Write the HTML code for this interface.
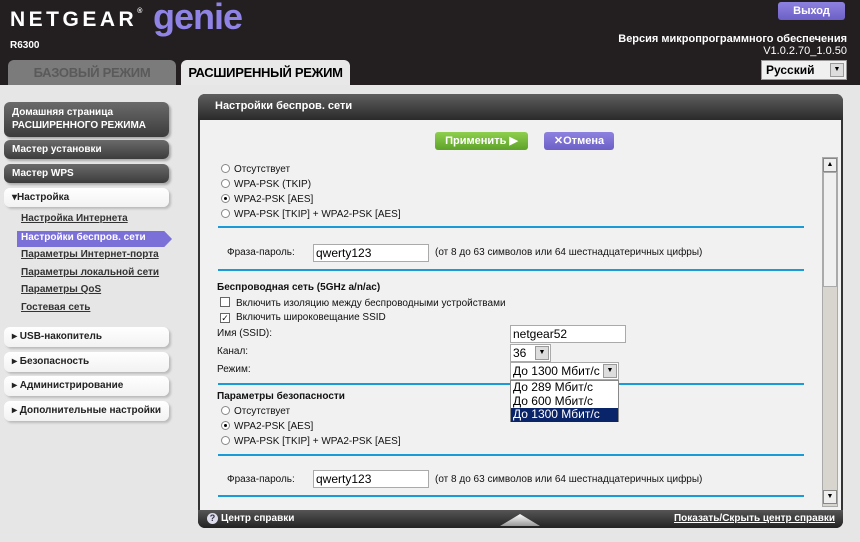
<!DOCTYPE html>
<html><head><meta charset="utf-8"><style>
*{box-sizing:border-box;margin:0;padding:0}
body{width:860px;height:542px;overflow:hidden;background:#e6e6e6;font-family:"Liberation Sans",Arial,sans-serif;position:relative;color:#000}
.a{position:absolute;white-space:nowrap}
#hdr{position:absolute;left:0;top:0;width:860px;height:85px;background:#231f20}
.tab{position:absolute;top:60px;height:25px;border-radius:6px 6px 0 0;font-weight:bold;font-size:13px;text-align:center;line-height:26px;white-space:nowrap;letter-spacing:-0.3px}
.side{position:absolute;left:4px;width:165px;border-radius:6px;font-size:10px;font-weight:bold;padding-left:8px;white-space:nowrap}
.dk{background:linear-gradient(#6a6a6a,#3c3c3c);color:#fff;box-shadow:2px 2px 2px #aaa}
.wt{background:linear-gradient(#fff,#f2f2f2);color:#222;box-shadow:2px 2px 2px #bbb}
.sub{position:absolute;left:21px;font-size:10px;font-weight:bold;color:#333;text-decoration:underline;white-space:nowrap}
.t{position:absolute;font-size:10px;white-space:nowrap;color:#111}
.rad{display:inline-block;width:9px;height:9px;border-radius:50%;border:1px solid #888;background:#fff;vertical-align:-1px;margin-right:4px;position:relative}
.rad.on::after{content:"";position:absolute;left:2px;top:2px;width:3px;height:3px;border-radius:50%;background:#000}
.cb{display:inline-block;width:10px;height:10px;border:1px solid #666;background:#fff;vertical-align:-1px;margin-right:6px;font-size:9px;line-height:8px;text-align:center}
.bl{position:absolute;left:218px;width:586px;height:2px;background:#1a9bd7}
.inp{position:absolute;background:#fff;border:1px solid #aaa;font-size:12px;padding-left:2px;line-height:16px;height:18px;white-space:nowrap}
.arr{position:absolute;right:1px;top:1px;width:14px;height:14px;background:#ddd;border:1px solid #999;font-size:7px;text-align:center;line-height:12px}
</style></head><body>
<div id="hdr"></div>
<div class="a" style="left:10px;top:8px;color:#fff;font-size:21px;font-weight:bold;letter-spacing:3.5px">NETGEAR<span style="font-size:7px;vertical-align:top;letter-spacing:0">®</span></div>
<div class="a" style="left:153px;top:-4px;color:#8f84e6;font-size:36px;font-weight:bold;letter-spacing:-1px">genie<span style="font-size:7px;vertical-align:top;letter-spacing:0;color:#bbb">™</span></div>
<div class="a" style="left:10px;top:40px;color:#fff;font-size:10px;font-weight:bold">R6300</div>
<div class="tab" style="left:8px;width:168px;background:#7b7b7b;color:#5a5a5a">БАЗОВЫЙ РЕЖИМ</div>
<div class="tab" style="left:181px;width:169px;background:#e8e8e8;color:#000">РАСШИРЕННЫЙ РЕЖИМ</div>
<div class="a" style="left:778px;top:2px;width:67px;height:18px;border-radius:3px;background:linear-gradient(#8e82e0,#6c5fc6);color:#fff;font-size:11px;font-weight:bold;text-align:center;line-height:18px">Выход</div>
<div class="a" style="right:13px;top:33px;color:#fff;font-size:11px;font-weight:bold">Версия микропрограммного обеспечения</div>
<div class="a" style="right:13px;top:45px;color:#fff;font-size:11px">V1.0.2.70_1.0.50</div>
<div class="a" style="left:761px;top:60px;width:86px;height:20px;background:#f0f0f0;border:1px solid #999;font-size:12px;font-weight:bold;padding-left:4px;line-height:18px">Русский<div class="arr" style="top:2px;right:2px">▼</div></div>
<div class="side dk" style="top:102px;height:35px;padding-top:4px;line-height:13px">Домашняя страница<br>РАСШИРЕННОГО РЕЖИМА</div>
<div class="side dk" style="top:140px;height:19px;line-height:19px">Мастер установки</div>
<div class="side dk" style="top:164px;height:19px;line-height:19px">Мастер WPS</div>
<div class="side wt" style="top:188px;height:19px;line-height:19px">▾Настройка</div>
<div class="sub" style="top:213px">Настройка Интернета</div>
<div class="a" style="left:17px;top:231px;width:155px;height:16px;background:#7b6fd8;clip-path:polygon(0 0,95% 0,100% 50%,95% 100%,0 100%)"></div>
<div class="sub" style="top:232px;color:#fff;text-decoration:none">Настройки беспров. сети</div>
<div class="sub" style="top:249px">Параметры Интернет-порта</div>
<div class="sub" style="top:267px">Параметры локальной сети</div>
<div class="sub" style="top:284px">Параметры QoS</div>
<div class="sub" style="top:302px">Гостевая сеть</div>
<div class="side wt" style="top:327px;height:20px;line-height:20px">▸ USB-накопитель</div>
<div class="side wt" style="top:352px;height:20px;line-height:20px">▸ Безопасность</div>
<div class="side wt" style="top:376px;height:20px;line-height:20px">▸ Администрирование</div>
<div class="side wt" style="top:401px;height:20px;line-height:20px">▸ Дополнительные настройки</div>
<div class="a" style="left:198px;top:94px;width:645px;height:434px;border-radius:7px;background:#333"></div>
<div class="a" style="left:198px;top:94px;width:645px;height:26px;border-radius:7px 7px 0 0;background:linear-gradient(#5e5e5e,#2a2a2a)"></div>
<div class="a" style="left:215px;top:100px;color:#fff;font-size:11px;font-weight:bold">Настройки беспров. сети</div>
<div class="a" style="left:200px;top:120px;width:641px;height:390px;background:#f1f1f1"></div>
<div class="a" style="left:435px;top:132px;width:93px;height:18px;border-radius:3px;background:linear-gradient(#8fcf4e,#5ea22a);color:#fff;font-size:11px;font-weight:bold;text-align:center;line-height:18px">Применить ▶</div>
<div class="a" style="left:544px;top:132px;width:70px;height:18px;border-radius:3px;background:linear-gradient(#8e82e0,#6c5fc6);color:#fff;font-size:11px;font-weight:bold;text-align:center;line-height:18px">✕Отмена</div>
<div class="a" style="left:822px;top:157px;width:16px;height:350px;background:#d8d4ce;border:1px solid #aaa"></div>
<div class="a" style="left:823px;top:158px;width:14px;height:14px;background:#eee;border:1px solid #888;font-size:7px;text-align:center;line-height:12px">▲</div>
<div class="a" style="left:823px;top:490px;width:14px;height:14px;background:#eee;border:1px solid #888;font-size:7px;text-align:center;line-height:12px">▼</div>
<div class="a" style="left:823px;top:172px;width:14px;height:115px;background:#f0f0f0;border:1px solid #aaa"></div>
<div class="t" style="left:221px;top:164px"><span class="rad"></span>Отсутствует</div>
<div class="t" style="left:221px;top:179px"><span class="rad"></span>WPA-PSK (TKIP)</div>
<div class="t" style="left:221px;top:194px"><span class="rad on"></span>WPA2-PSK [AES]</div>
<div class="t" style="left:221px;top:209px"><span class="rad"></span>WPA-PSK [TKIP] + WPA2-PSK [AES]</div>
<div class="bl" style="top:226px"></div>
<div class="t" style="left:227px;top:247px">Фраза-пароль:</div>
<div class="inp" style="left:313px;top:244px;width:116px">qwerty123</div>
<div class="t" style="left:435px;top:247px">(от 8 до 63 символов или 64 шестнадцатеричных цифры)</div>
<div class="bl" style="top:269px"></div>
<div class="t" style="left:217px;top:282px;font-weight:bold">Беспроводная сеть (5GHz a/n/ac)</div>
<div class="t" style="left:220px;top:297px"><span class="cb"></span>Включить изоляцию между беспроводными устройствами</div>
<div class="t" style="left:220px;top:312px"><span class="cb">✓</span>Включить широковещание SSID</div>
<div class="t" style="left:217px;top:328px">Имя (SSID):</div>
<div class="t" style="left:217px;top:346px">Канал:</div>
<div class="t" style="left:217px;top:364px">Режим:</div>
<div class="inp" style="left:510px;top:325px;width:116px">netgear52</div>
<div class="inp" style="left:510px;top:344px;width:41px">36<div class="arr">▼</div></div>
<div class="inp" style="left:510px;top:362px;width:109px">До 1300 Мбит/с<div class="arr">▼</div></div>
<div class="bl" style="top:383px"></div>
<div class="a" style="left:510px;top:380px;width:109px;height:42px;background:#fff;border:1px solid #888;font-size:12px;line-height:13.5px">
<div style="padding-left:2px">До 289 Мбит/с</div><div style="padding-left:2px">До 600 Мбит/с</div><div style="padding-left:2px;background:#0a246a;color:#fff">До 1300 Мбит/с</div></div>
<div class="t" style="left:217px;top:391px;font-weight:bold">Параметры безопасности</div>
<div class="t" style="left:221px;top:406px"><span class="rad"></span>Отсутствует</div>
<div class="t" style="left:221px;top:421px"><span class="rad on"></span>WPA2-PSK [AES]</div>
<div class="t" style="left:221px;top:436px"><span class="rad"></span>WPA-PSK [TKIP] + WPA2-PSK [AES]</div>
<div class="bl" style="top:454px"></div>
<div class="t" style="left:227px;top:474px">Фраза-пароль:</div>
<div class="inp" style="left:313px;top:470px;width:116px">qwerty123</div>
<div class="t" style="left:435px;top:474px">(от 8 до 63 символов или 64 шестнадцатеричных цифры)</div>
<div class="bl" style="top:495px"></div>
<div class="a" style="left:198px;top:510px;width:645px;height:18px;border-radius:0 0 7px 7px;background:linear-gradient(#555,#222)"></div>
<div class="a" style="left:500px;top:514px;width:40px;height:12px;background:linear-gradient(#fff,#999);clip-path:polygon(50% 0,100% 100%,0 100%)"></div>
<div class="a" style="left:207px;top:513px;width:11px;height:11px;border-radius:50%;background:#dde;color:#334;font-size:9px;font-weight:bold;text-align:center;line-height:11px">?</div>
<div class="a" style="left:221px;top:513px;color:#fff;font-size:10px;font-weight:bold">Центр справки</div>
<div class="a" style="right:25px;top:513px;color:#fff;font-size:10px;font-weight:bold;text-decoration:underline">Показать/Скрыть центр справки</div>
</body></html>
